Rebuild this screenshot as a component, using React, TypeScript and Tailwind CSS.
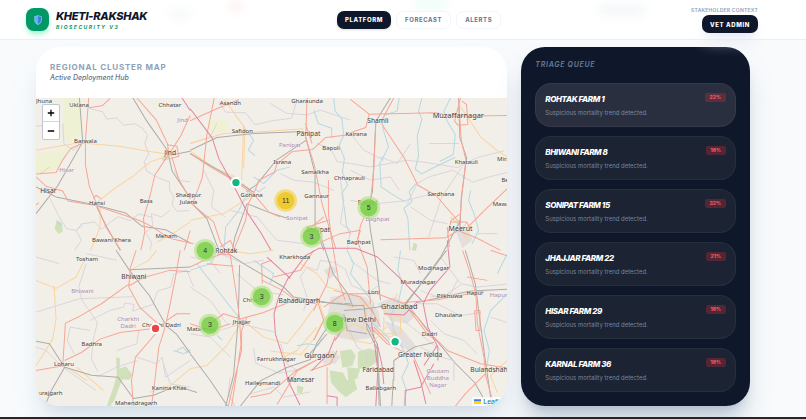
import React from 'react';

type Kind = 'edge' | 'river' | 'rail' | 'minor' | 'road' | 'motorway';

const STROKES: Record<Kind, { stroke: string; width: number }> = {
  edge: { stroke: '#d6cfd8', width: 2.5 },
  river: { stroke: '#b5d8e3', width: 3 },
  minor: { stroke: '#f9d49f', width: 3 },
  rail: { stroke: '#aeaba8', width: 3 },
  road: { stroke: '#f8a596', width: 3 },
  motorway: { stroke: '#e5839f', width: 3 },
};

// Each tile is 480 units wide and is placed on a 3 x 2 grid, the last one adds the Delhi area
const TILES: { x: number; y: number; lines: [Kind, string][] }[] = [
  {
    x: 0,
    y: 0,
    lines: [
      ['edge', 'M18 108l30 -2M98 100l4 62 28 18 22 -20M178 55l40 10 12 22 30 -4 20 22 34 -4 22 12 16 22 -8 26 12 30 -14 24 8 28 40 22 28 10 0 24 12 20 -4 26 14 18 36 -2M60 325l30 60 20 30 30 6 14 -20 40 -6 20 22 50 -38 36 12 26 -20 40 10M134 480l20 -30 -16 -30 20 -16M420 360l-26 20 -30 -10 4 40 -22 16 18 30 -4 24M480 275l-30 -4 -18 -30'],
      ['river', 'M80 392l16 14'],
      ['minor', 'M18 180l130 -22 120 10 90 16 60 8M190 345l60 -48 60 -40 50 -42 60 -20M210 350l0 60 -28 70M480 395l-60 40 -40 20M60 230l-30 20'],
      ['rail', 'M148 23l10 132 -74 130 -66 85M18 290l60 30 118 24 90 24 50 40 70 10 74 40M308 23l42 70 62 88 14 62 40 60 14 20M200 350l30 60 40 70M420 195l60 -12'],
      ['road', 'M176 23l-10 130 0 70 12 66 22 52M176 53l40 -6 24 -22M166 155l-44 20 -24 34 -20 38 -60 4M18 260l30 28 50 14 16 30 82 14 60 20 70 24 34 16 58 38 72 16M200 345l28 66 44 69M320 23l58 66 34 72 4 30 -42 64 -14 60 -20 70 4 40 -12 55M410 164l30 4 6 30 -30 8M418 190l34 -54 28 -60M480 420l-18 60M425 200l20 66 35 60M18 345l8 -8M190 325l8 -10 14 10'],
      ['motorway', 'M455 23l25 38'],
    ],
  },
  {
    x: 480,
    y: 0,
    lines: [
      ['edge', 'M86 36l20 30 60 2 28 36 50 -12 60 -8 14 -50M0 160l60 -20 20 -40M240 40l50 30 60 4 40 -14 90 30M40 240l30 60 -6 50 40 30M270 250l40 20 60 6 60 24M380 160l40 14 20 40 40 6M120 360l80 20 60 70 80 10'],
      ['river', 'M430 23l4 40 20 22 6 50 -14 30 16 40 -6 40 16 40 -18 24 8 46 6 50 12 30M176 130l14 20 -16 30 20 16M370 60l14 40 40 14 0 30M190 260l30 20 40 -40 40 -10M176 300l-30 60 -40 50 -4 60M225 290l-20 15 -8 -8'],
      ['minor', 'M0 160l100 -30 90 -4 150 -10M104 30l60 84 -4 120M0 182l70 50 60 26 50 42M0 390l100 -20 80 -50M160 110l-6 160'],
      ['rail', 'M0 180l80 -38 110 -12 150 -6M348 150l-90 60 -60 74 -30 20M0 190l50 30 80 46 60 40M346 140l28 110 0 160 26 70M170 340l-36 100 -8 40M170 340l60 24 60 20M0 335l50 50 34 90'],
      ['road', 'M350 23l-4 120 26 82 24 120 40 130M0 92l66 -30 80 -34M72 23l-22 110 -14 130 -30 80M0 190l60 40 70 40 62 44 44 52 34 14M190 310l16 -40 46 -24 8 -24 46 -38 60 -6 40 -36 70 -8M130 480l36 -90 8 -50 16 -30M340 430l60 -50M10 345l60 50 20 60 14 25M345 100l20 60M90 470l30 -20 14 30'],
      ['motorway', 'M0 56l66 88 20 62 40 72 46 90 40 60 30 52'],
    ],
  },
  {
    x: 960,
    y: 0,
    lines: [
      ['edge', 'M0 220l60 10 110 -20 50 6 100 16 60 -30 80 -20M235 160l90 0M0 240l60 30 60 -10 26 40M170 340l30 -60 36 -20 70 -20 60 36 50 -16 56 -14M0 330l60 12 100 -10 80 -20M234 440l40 -120 60 -90M0 130l40 50 60 30M90 200l50 20 40 -60M180 350l60 40 50 10M380 430l60 0'],
      ['river', 'M146 23l-6 40 -40 12M214 23l-10 40 10 24 -14 50 4 60 -10 40 20 14 30 -16 70 -34M300 23l-20 40 10 30 24 40 -6 60 -40 20M96 110l18 60 -10 20 -16 30 4 70 30 20 40 24M360 300l-6 30 16 40 14 50 -20 40M196 280l-20 24 8 30 -24 20 12 30 6 96'],
      ['minor', 'M330 50l60 90 50 42 40 24M330 420l20 -24M300 380l30 30 20 40'],
      ['rail', 'M120 23l-44 70 -10 210 -16 60M324 23l4 120 20 60 -16 120 -4 90'],
      ['road', 'M0 28l56 44 -10 40 -46 16M130 23l-38 72 8 16 60 90 42 84 54 30 72 84M56 72l200 -4 50 10 174 -2M76 96l-6 140 -10 100 -30 70 -10 50M330 23l-18 70 10 12 30 -2 -4 -60 -14 -10M324 30l8 120 14 60 -12 100 -8 110M480 286l-70 66 -60 60M320 420l60 24 70 36M290 410l6 60M330 370l-28 20 -12 50M298 395l50 0 10 20'],
    ],
  },
  {
    x: 0,
    y: 480,
    lines: [
      ['edge', 'M18 185l130 -40 160 -6M168 40l-22 70 10 40 46 66 -12 50 -6 60 20 38M260 30l-90 -20M180 240l-60 -10 -8 40 20 40M180 210l60 -30 40 -10 4 -12 28 4 -4 20 60 -20 14 -40 40 -12 8 -38 40 -12 20 50M326 240l-6 40 -60 20M320 320l60 20 16 -20 10 60 74 -50M18 290l30 10 50 50 100 70M18 20l70 20M400 340l20 60 60 10M200 380l60 -30 60 -20'],
      ['river', 'M430 300l30 10 20 -12M440 300l18 -10 16 18'],
      ['minor', 'M18 90l60 24 60 -34 30 -60M72 106l6 100 -10 60 -50 80M300 60l56 -30 24 -30M140 350l80 70M480 355l-60 50 -60 20M110 350l60 40'],
      ['rail', 'M258 0l40 60 60 76 50 90 30 24 42 58M18 272l40 8 46 70 80 24 80 6 46 64 60 -10 70 -28 60 20M104 350l-40 70 -20 47M300 58l180 -8'],
      ['road', 'M300 60l-4 50 32 60 66 60M298 60l20 -60M298 106l40 -24 80 -22 62 4M298 100l-84 60 -66 38 -42 20 -8 130 M104 330l50 -24 56 -40 60 -20 100 -12M450 0l-14 80 -20 100 -14 60 -16 50 -12 100 -10 77M18 360l90 -16M376 250l-60 70 -12 70 6 77M410 210l30 -20 40 0'],
    ],
  },
  {
    x: 480,
    y: 480,
    lines: [
      ['edge', 'M0 110l60 40 50 70M190 294l6 44 70 30 60 -10M90 240l60 -20 100 24M270 280l20 60 30 20M0 250l60 10 60 60M0 20l60 10 30 40M140 70l60 50 80 14M120 380l-6 50 20 37M180 430l70 -20 30 30 80 -16M90 10l70 30 60 -10'],
      ['river', 'M0 60l60 -20 14 -20M20 40l140 180M80 255l16 14M190 30l60 40 -10 30'],
      ['minor', 'M0 355l50 -10 60 -60 50 -80M160 210l60 50 70 20 40 -50 50 -70M260 330l60 -30 60 -70'],
      ['rail', 'M100 0l60 40 120 70 30 30 110 18 60 2M148 44l-4 160 -14 170 -24 93M0 310l60 80 52 77M150 467l60 -76 80 -40 70 -24 20 -50 40 -60'],
      ['road', 'M0 50l50 -24 60 -20M80 10l40 4 14 90 14 100 4 80 -28 183M50 40l80 8M150 206l70 -20 100 -40M216 100l-2 -60 30 -10 M216 90l60 30 40 30 60 10M60 220l40 -30 50 16M170 200l-16 40 0 60 -20 80 -20 87M180 440l60 -12 80 -70 60 -30M260 462l60 -100 70 -40M0 220l60 20 60 -20'],
    ],
  },
  {
    x: 960,
    y: 480,
    lines: [
      ['edge', 'M270 20l60 80 50 10 100 -10M200 160l60 0 70 36 60 -10M130 20l60 10 20 40M240 210l40 40 60 20 40 40M0 30l80 60 40 10M420 200l60 20M160 210l60 50 50 40M210 120l60 24 60 -40M320 90l-20 40 -60 10'],
      ['river', 'M150 0l-8 60 14 40 -14 60 -20 30M480 120l-60 60 -20 60 16 60 -10 60M120 190l10 50 30 60 14 40 -20 40 14 40 -8 44M470 10l-30 60'],
      ['minor', 'M100 180l30 30 -4 50 -50 -14M480 320l-60 56 20 50M140 130l-20 50'],
      ['rail', 'M288 0l-60 80 -66 82 40 40 110 134 60 60 40 71M200 156l160 -34 120 -6M344 0l30 100 10 80 20 150 20 137M50 220l30 60 10 187M130 390l0 -60 60 -40 60 -14M124 467l4 -80'],
      ['road', 'M170 160l60 80 60 60 100 40 90 14M160 156l100 -8 140 -26M336 0l20 60 20 70 4 90 20 100 6 60M480 20l-60 -20M404 370l-60 60 -30 37M404 370l26 97M374 180l14 0 0 60 -12 0 -4 -60M410 90l-60 -10M60 230l50 50 30 10'],
      ['motorway', 'M80 280l14 60 6 60M220 345l40 -60M60 200l10 60 12 100 -6 107'],
    ],
  },
  {
    x: 510,
    y: 270,
    lines: [
      ['edge', 'M300 290l20 -30 30 10 10 -30 40 6 34 20 20 50 50 20 30 -20M300 290l20 60 -10 40M440 430l30 70 30 20 0 30M420 0l10 60 -10 70 30 20 -10 60M660 500l60 30 40 10 0 60'],
      ['river', 'M440 210l20 40 -10 30 40 50 30 40 -10 50 60 60 40 20M290 496l30 -6 34 4 10 -20'],
      ['minor', 'M80 210l70 10 70 -10M300 250l50 30 30 40 40 10M352 352l20 60 -30 60 -40 50 -90 -10M400 470l60 -40 60 30 40 -20M430 440l30 40 50 10 30 -30M410 360l40 20 60 -10M550 400l50 10 0 50 -50 0 0 -50M470 340l30 60 -20 60'],
      ['rail', 'M348 140l20 50 30 90 44 60 16 40M360 365l100 10 30 0 10 70 30 60 6 170M500 60l10 90 20 120 10 90M780 120l-60 110 -110 150M430 390l60 -4 70 -10M430 400l10 50 60 10M380 460l-60 70'],
      ['road', 'M384 0l0 100 10 80 20 120 20 60M320 140l64 -20M350 190l70 -30 60 -10M480 150l-10 30 30 80 10 110M540 178l200 -6M740 170l50 -30M370 380l60 -40 100 0 80 30M340 390l40 -80 10 -60M340 480l30 -60 -20 -60M520 440l60 60 60 30 50 110M380 560l0 110M330 570l60 -20 20 -40M620 380l60 80 40 30M510 380l30 60M400 330l80 20 40 50M220 290l80 -20 40 -60'],
      ['motorway', 'M200 230l70 64M265 294l50 -68 40 -22 110 0 66 26 64 60 68 70M265 290l-30 60 -14 50 4 60 22 70 16 70 36 74M740 180l8 80 -60 70 -20 40 14 70 30 60 0 40M550 400l60 4 40 -40M404 470l-20 50 -50 50M430 440l-26 40M380 646l30 4 0 28M640 540l20 60 16 70M700 550l-40 70 -46 10 0 46'],
    ],
  },
];

const WOODS = [
  'M80 390l16 8 2 26 -12 6 -12 -14z',
  'M395 205l14 -8 8 10 -18 6z',
  'M1150 456l10 8 -4 18 -12 -4z',
  'M258 800l12 4 -2 30 20 -6 18 24 -8 16 -20 -2 -12 26 -12 36 -14 18 -10 0 18 -50 12 -40z',
  'M928 782l34 -6 14 20 -10 30 -30 6z',
  'M982 784l34 -10 28 10 -6 30 -30 24 -26 -6z',
  'M898 840l40 6 12 24 22 -4 8 30 -34 24 -24 -20 -20 -24z',
  'M800 884l20 6 -6 20 -14 -4z',
  'M950 830l40 4 -10 30 -26 10z',
];

const FIELDS = [
  'M98 23h55l0 110 -40 30 -14 -40z',
  'M18 190l60 -10 40 -10 -36 70 -66 12z',
  'M530 90l60 0 10 30 -60 10z',
];

const URBAN = [
  'M900 620l60 -10 44 10 40 40 6 40 -20 40 -60 10 -50 -10 -30 -50z',
  'M1040 640l50 -20 40 20 20 40 -20 20 -50 -10z',
  'M876 790l34 -10 20 20 -16 20 -36 0z',
  'M1060 690l50 20 50 60 -20 20 -50 -50z',
  'M1275 420l40 0 10 30 -30 24z',
  'M880 540l28 -14 14 16 -24 24z',
];

type Label = [string, number, number, number?];

const PLACES: Label[] = [
  ['Uklana', 147, 46], ['Chhatar', 419, 46], ['Barwala', 166, 151], ['Jind', 420, 189, 20],
  ['Hisar', 55, 302, 20], ['Hansi', 201, 338], ['Bass', 348, 333], ['Shadipur', 475, 315],
  ['Julana', 475, 336], ['Bawani Khera', 244, 449], ['Meham', 408, 436], ['Jhuna', 42, 33],
  ['Asandh', 600, 40], ['Gharaunda', 830, 33], ['Safidon', 636, 124], ['Panipat', 834, 133, 20],
  ['Israna', 756, 214], ['Bapoli', 902, 172], ['Samalkha', 854, 244], ['Chhaprauli', 957, 264],
  ['Kairana', 977, 131], ['Gannaur', 859, 318], ['Gohana', 664, 315], ['Sonipat', 863, 418, 20],
  ['Rohtak', 588, 483, 20], ['Baraut', 1012, 339, 19], ['Baghpat', 985, 454], ['Shamli', 1042, 93, 20],
  ['Muzaffarnagar', 1283, 79, 22], ['Khatauli', 1307, 214], ['Mirapur', 1433, 206], ['Sardhana', 1231, 310],
  ['Mawana', 1422, 342], ['Meerut', 1290, 416, 21], ['Behsuma', 1452, 269], ['Tosham', 171, 506],
  ['Bhiwani', 311, 560, 20], ['Charkhi Dadri', 394, 705], ['Badhra', 185, 762], ['Loharu', 102, 821],
  ['Kanina Khas', 417, 891], ['Surajgarh', 56, 908], ['Mahendragarh', 318, 936], ['Kharkhoda', 793, 501],
  ['Bahadurgarh', 807, 633, 20], ['Chhara', 668, 630], ['Jhajjar', 634, 696], ['Matanhail', 512, 715],
  ['Farrukhnagar', 738, 807], ['Gurgaon', 867, 796, 22], ['Haileymandi', 697, 877], ['Manesar', 811, 868, 20],
  ['New Delhi', 984, 689, 22], ['Modinagar', 1209, 534], ['Muradnagar', 1163, 576], ['Loni', 1030, 605],
  ['Hapur', 1333, 607, 17], ['Pilkhuwa', 1257, 618], ['Ghaziabad', 1106, 649, 22], ['Dhaulana', 1254, 675],
  ['Dadri', 1197, 732], ['Greater Noida', 1169, 794, 20], ['Bulandshahr', 1379, 838, 20],
  ['Faridabad', 1043, 839, 20], ['Ballabgarh', 1051, 892],
];

const DISTRICTS: Label[] = [
  ['Jind', 457, 92], ['Hisar', 110, 241], ['Panipat', 778, 165], ['Sonipat', 800, 384],
  ['Baghpat', 1041, 387], ['Bhiwani', 157, 604], ['Charkhi', 294, 688], ['Dadri', 294, 708],
  ['Hapur', 1404, 615], ['Gautam', 1222, 843], ['Buddha', 1222, 863], ['Nagar', 1222, 884],
];

const CLUSTERS = [
  { count: 11, x: 766, y: 331, ring: '#f1d357', fill: '#f0c20c' },
  { count: 5, x: 1015, y: 352, ring: '#b5e28c', fill: '#6ecc39' },
  { count: 3, x: 843, y: 438, ring: '#b5e28c', fill: '#6ecc39' },
  { count: 4, x: 525, y: 480, ring: '#b5e28c', fill: '#6ecc39' },
  { count: 3, x: 694, y: 619, ring: '#b5e28c', fill: '#6ecc39' },
  { count: 3, x: 539, y: 704, ring: '#b5e28c', fill: '#6ecc39' },
  { count: 8, x: 913, y: 699, ring: '#b5e28c', fill: '#6ecc39' },
];

const PINS = [
  { x: 617, y: 277, fill: '#10b981' },
  { x: 1094, y: 754, fill: '#10b981' },
  { x: 376, y: 714, fill: '#ef4444' },
];

const FARMS = [
  { name: 'Rohtak Farm 1', rate: '22%', active: true },
  { name: 'Bhiwani Farm 8', rate: '18%' },
  { name: 'Sonipat Farm 15', rate: '32%' },
  { name: 'Jhajjar Farm 22', rate: '21%' },
  { name: 'Hisar Farm 29', rate: '18%' },
  { name: 'Karnal Farm 36', rate: '18%' },
];

function ShieldIcon({ className }: { className?: string }) {
  return (
    <svg viewBox="0 0 16 20" className={className} aria-hidden="true">
      <path d="M8 0c2 1.600 4.500 2.300 7.500 2.300V10c0 5-3.500 8.300-7.500 10C4 18.300.5 15 .5 10V2.300C3.500 2.300 6 1.600 8 0z" fill="#8fbfe0" />
      <path d="M8 2v16c-3.400-1.600-6-4.200-6-8V3.700C4.300 3.600 6.300 3 8 2z" fill="#5eb1f5" />
      <path d="M8 2v16c3.400-1.600 6-4.200 6-8V3.700C11.700 3.600 9.700 3 8 2z" fill="#2f86dc" />
    </svg>
  );
}

function Header() {
  return (
    <header className="relative z-10 border-b border-slate-200/70 bg-white">
      {/* Soft tints behind the bar */}
      <div className="absolute inset-0 overflow-hidden" aria-hidden="true">
        <div className="absolute left-[168px] top-2 h-3 w-6 rounded-full bg-slate-300/15 blur-[5px]" />
        <div className="absolute left-[228px] top-0 h-3 w-4 rounded-full bg-red-300/15 blur-[5px]" />
        <div className="absolute left-[415px] top-0 h-2 w-8 rounded-full bg-emerald-300/15 blur-[5px]" />
        <div className="absolute left-[598px] top-1 h-3 w-12 rounded-full bg-slate-300/20 blur-[5px]" />
      </div>
      <div className="relative flex h-[39px] items-center justify-between pl-[26px] pr-12">
        {/* Logo */}
        <div className="flex items-center gap-[7px]">
          <div className="flex h-[23px] w-[23px] items-center justify-center rounded-lg bg-emerald-600 shadow-md shadow-emerald-200">
            <ShieldIcon className="h-[10px] w-2" />
          </div>
          <div>
            <h1 className="text-[11px] leading-[14px] font-extrabold tracking-tight text-slate-900 italic">
              KHETI-RAKSHAK
            </h1>
            <p className="text-[5px] leading-[8px] font-bold tracking-[0.3em] text-emerald-600 italic">
              BIOSECURITY V3
            </p>
          </div>
        </div>

        {/* Navigation */}
        <nav className="flex items-center gap-[5px] text-[6px] font-bold tracking-widest text-slate-500">
          <button className="h-[18px] rounded-[7px] bg-slate-900 px-2 font-extrabold text-white shadow-sm">
            PLATFORM
          </button>
          <button className="h-[18px] rounded-[7px] border border-slate-100 bg-white px-2">
            FORECAST
          </button>
          <button className="h-[18px] rounded-[7px] border border-slate-100 bg-white px-2">
            ALERTS
          </button>
        </nav>

        {/* Role */}
        <div className="flex flex-col items-end gap-px">
          <span className="text-[5px] leading-[8px] font-semibold tracking-wider text-slate-400">
            STAKEHOLDER CONTEXT
          </span>
          <button className="h-[18px] rounded-[7px] bg-slate-900 px-2 text-[6px] font-extrabold tracking-widest text-white shadow-lg shadow-slate-200">
            VET ADMIN
          </button>
        </div>
      </div>
    </header>
  );
}

function MapCanvas() {
  return (
    <svg
      viewBox="18 23 1412 924"
      preserveAspectRatio="xMidYMid slice"
      className="h-full w-full bg-[#f2efe9]"
      style={{ fontFamily: '"Noto Sans", sans-serif' }}
      role="img"
      aria-label="Map of farm clusters around Delhi and Haryana">
      <g fill="#eff1d5">
        {FIELDS.map((d) => (
          <path key={d} d={d} />
        ))}
      </g>
      <g fill="#e2dfdc">
        {URBAN.map((d) => (
          <path key={d} d={d} />
        ))}
      </g>
      <g fill="#cfe0ba">
        {WOODS.map((d) => (
          <path key={d} d={d} />
        ))}
      </g>
      {TILES.map((tile) => (
        <g
          key={`${tile.x}-${tile.y}`}
          transform={`translate(${tile.x} ${tile.y})`}
          fill="none"
          strokeLinejoin="round">
          {tile.lines.map(([kind, d]) => (
            <path key={d} d={d} stroke={STROKES[kind].stroke} strokeWidth={STROKES[kind].width} />
          ))}
        </g>
      ))}
      <g
        textAnchor="middle"
        stroke="#f7f4ee"
        strokeWidth="3"
        strokeOpacity="0.5"
        paintOrder="stroke">
        <g fill="#a98bb8">
          {DISTRICTS.map(([name, x, y]) => (
            <text key={name} x={x} y={y + 5} fontSize="18">
              {name}
            </text>
          ))}
        </g>
        <g fill="#45423f">
          {PLACES.map(([name, x, y, size = 18]) => (
            <text key={name} x={x} y={y + 6} fontSize={size}>
              {name}
            </text>
          ))}
        </g>
      </g>
      {PINS.map((pin) => (
        <circle key={pin.x} cx={pin.x} cy={pin.y} r="14" fill={pin.fill} stroke="#fff" strokeWidth="6" />
      ))}
      {CLUSTERS.map((c) => (
        <g key={c.x}>
          <circle cx={c.x} cy={c.y} r="34" fill={c.ring} fillOpacity="0.7" />
          <circle cx={c.x} cy={c.y} r="26" fill={c.fill} fillOpacity="0.7" />
          <text
            x={c.x}
            y={c.y + 7}
            textAnchor="middle"
            fontSize="21"
            fill="#333"
            fontFamily="Liberation Sans, sans-serif">
            {c.count}
          </text>
        </g>
      ))}
    </svg>
  );
}

function ClusterMap() {
  return (
    <section className="col-span-2 flex flex-col overflow-hidden rounded-3xl bg-white shadow-xl shadow-slate-300/60">
      <div className="px-[14px] pt-[14px] pb-4">
        <h2 className="text-[8px] leading-[12px] font-bold tracking-widest text-slate-400">
          REGIONAL CLUSTER MAP
        </h2>
        <p className="text-[7px] leading-[9px] font-medium text-slate-500 italic">
          Active Deployment Hub
        </p>
      </div>
      <div className="relative min-h-[300px] flex-1">
        <div className="absolute inset-0">
          <MapCanvas />
        </div>
        {/* Zoom */}
        <div className="absolute left-[6px] top-[6px] flex flex-col divide-y divide-gray-300 overflow-hidden rounded-xs border border-gray-400/60 bg-white text-black">
          <button aria-label="Zoom in" className="flex h-[17px] w-4 items-center justify-center">
            <svg viewBox="0 0 8 8" className="h-2 w-2" stroke="currentColor" strokeWidth="1.300">
              <path d="M4 .8v6.400M.8 4h6.400" />
            </svg>
          </button>
          <button aria-label="Zoom out" className="flex h-[17px] w-4 items-center justify-center">
            <svg viewBox="0 0 8 8" className="h-2 w-2" stroke="currentColor" strokeWidth="1.300">
              <path d="M.8 4h6.400" />
            </svg>
          </button>
        </div>
        {/* Attribution */}
        <a
          href="https://leafletjs.com"
          className="absolute right-0 bottom-0 flex h-[9px] items-center gap-[2px] bg-white/80 pr-[3px] pl-[2px] font-['Liberation_Sans',sans-serif] text-[7px] leading-[9px] text-[#0078a8]">
          <svg viewBox="0 0 12 8" className="h-[5px] w-[7px]" aria-hidden="true">
            <path fill="#4C7BE1" d="M0 0h12v4H0z" />
            <path fill="#FFD500" d="M0 4h12v3H0z" />
            <path fill="#E0BC00" d="M0 7h12v1H0z" />
          </svg>
          Leaflet
        </a>
      </div>
    </section>
  );
}

function TriageQueue() {
  return (
    <section className="rounded-3xl bg-slate-900 px-[14px] pt-3 pb-[14px] shadow-xl shadow-slate-400/50">
      <h2 className="text-[7px] leading-[12px] font-bold tracking-widest text-slate-500 italic">
        TRIAGE QUEUE
      </h2>
      <ul className="mt-3 flex flex-col gap-[9px]">
        {FARMS.map((farm) => (
          <li
            key={farm.name}
            className={`flex h-11 items-start justify-between rounded-2xl border border-white/5 px-[9px] pt-[9px] ${
              farm.active ? 'bg-[#2a2f40]' : 'bg-[#1c2333]'
            }`}>
            <div>
              <h3 className="text-[8px] leading-[12px] font-extrabold tracking-tighter text-white uppercase italic">
                {farm.name}
              </h3>
              <p className="mt-[3px] text-[6px] leading-[9px] text-slate-400/80">
                Suspicious mortality trend detected.
              </p>
            </div>
            <span className="rounded-xs bg-red-500/25 px-[5px] text-[5px] leading-[9px] font-bold text-red-400">
              {farm.rate}
            </span>
          </li>
        ))}
      </ul>
    </section>
  );
}

export default function App() {
  return (
    <div className="flex min-h-screen flex-col bg-slate-50 font-['Inter',sans-serif]">
      <Header />
      <main className="grid flex-1 grid-cols-3 gap-[14px] pt-[7px] pr-14 pb-[11px] pl-9">
        <ClusterMap />
        <TriageQueue />
      </main>
      <footer className="h-[2px] bg-neutral-800" />
    </div>
  );
}
